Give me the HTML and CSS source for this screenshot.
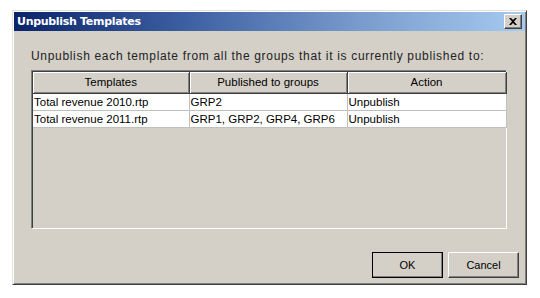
FILE: index.html
```html
<!DOCTYPE html>
<html lang="en">
<head>
    <meta charset="UTF-8">
    <title>Unpublish Templates</title>
    <link rel="stylesheet" href="styles.css">
</head>
<body>
    <div class="dialog">
        <div class="titlebar">
            <span class="title">Unpublish Templates</span>
            <button class="close-btn" type="button" aria-label="Close">
                <svg width="8" height="7" viewBox="0 0 8 7">
                    <path d="M0 0h2l2 2 2-2h2L5 3.5 8 7H6L4 5 2 7H0l3-3.5z" fill="#000"/>
                </svg>
            </button>
        </div>
        <div class="dialog-body">
            <p class="intro">Unpublish each template from all the groups that it is currently published to:</p>
            <div class="grid-frame">
                <table class="grid">
                    <thead>
                        <tr>
                            <th class="col-template">Templates</th>
                            <th class="col-groups">Published to groups</th>
                            <th class="col-action">Action</th>
                        </tr>
                    </thead>
                    <tbody>
                        <tr>
                            <td>Total revenue 2010.rtp</td>
                            <td>GRP2</td>
                            <td>Unpublish</td>
                        </tr>
                        <tr>
                            <td>Total revenue 2011.rtp</td>
                            <td>GRP1, GRP2, GRP4, GRP6</td>
                            <td>Unpublish</td>
                        </tr>
                    </tbody>
                </table>
            </div>
            <div class="actions">
                <button type="button" class="btn btn-default">OK</button>
                <button type="button" class="btn">Cancel</button>
            </div>
        </div>
    </div>
</body>
</html>
```

FILE: styles.css
```css
* {
    box-sizing: border-box;
    margin: 0;
    padding: 0;
}

body {
    background: #ffffff;
    font-family: 'Liberation Sans', Arial, sans-serif;
    font-size: 11px;
    color: #000;
}

.dialog {
    margin: 10px 0 0 12px;
    width: 515px;
    height: 275px;
    background: #d4d0c8;
    border: 1px solid;
    border-color: #e4e2dc #404040 #404040 #e4e2dc;
    box-shadow: inset 1px 1px 0 #ffffff, inset -1px -1px 0 #808080;
    padding: 1px;
    display: flex;
    flex-direction: column;
}

.titlebar {
    height: 19px;
    background: linear-gradient(to right, #0a246a 0%, #3f62a4 35%, #7d9fd0 70%, #a6caf0 100%);
    display: flex;
    align-items: center;
    justify-content: space-between;
    padding: 0 3px 0 3px;
}

.title {
    color: #ffffff;
    font-family: 'DejaVu Sans', Verdana, sans-serif;
    font-weight: bold;
    font-size: 11px;
    letter-spacing: -0.3px;
}

.close-btn {
    width: 18px;
    height: 15px;
    background: #d4d0c8;
    border: 1px solid;
    border-color: #ffffff #404040 #404040 #ffffff;
    box-shadow: inset -1px -1px 0 #808080;
    display: flex;
    align-items: center;
    justify-content: center;
}

.dialog-body {
    flex: 1;
    display: flex;
    flex-direction: column;
    padding: 18px 6px 5px 17px;
}

.intro {
    line-height: 14px;
    font-size: 12px;
    letter-spacing: 0.68px;
    color: #222;
}

.grid-frame {
    margin-top: 7px;
    width: 476px;
    height: 159px;
    background: #d4d0c8;
    border: 1px solid;
    border-color: #808080 #ffffff #ffffff #808080;
    box-shadow: inset 1px 1px 0 #404040;
    padding: 1px 0 0 1px;
}

.grid {
    border-collapse: collapse;
    table-layout: fixed;
    width: 473px;
    font-size: 11.5px;
}

.grid th {
    height: 21px;
    font-weight: normal;
    text-align: center;
    background: #d4d0c8;
    border-right: 1px solid #404040;
    border-bottom: 1px solid #404040;
    box-shadow: inset 1px 1px 0 #ffffff, inset -1px -1px 0 #808080;
    padding: 0;
}

.col-template { width: 156px; }
.col-groups { width: 158px; }
.col-action { width: 159px; }

.grid td {
    height: 17px;
    background: #ffffff;
    border: 1px solid #c0c0c0;
    border-top: none;
    padding: 0 2px 0 1px;
    white-space: nowrap;
    overflow: hidden;
}

.grid td:first-child {
    border-left: none;
}

.actions {
    margin-top: auto;
    display: flex;
    justify-content: flex-end;
    gap: 5px;
}

.btn {
    width: 71px;
    height: 26px;
    background: #d4d0c8;
    font-family: 'Liberation Sans', Arial, sans-serif;
    font-size: 11px;
    color: #000;
    border: 1px solid;
    border-color: #ffffff #404040 #404040 #ffffff;
    box-shadow: inset -1px -1px 0 #808080;
}

.btn-default {
    outline: 1px solid #000;
    outline-offset: -1px;
}
```
